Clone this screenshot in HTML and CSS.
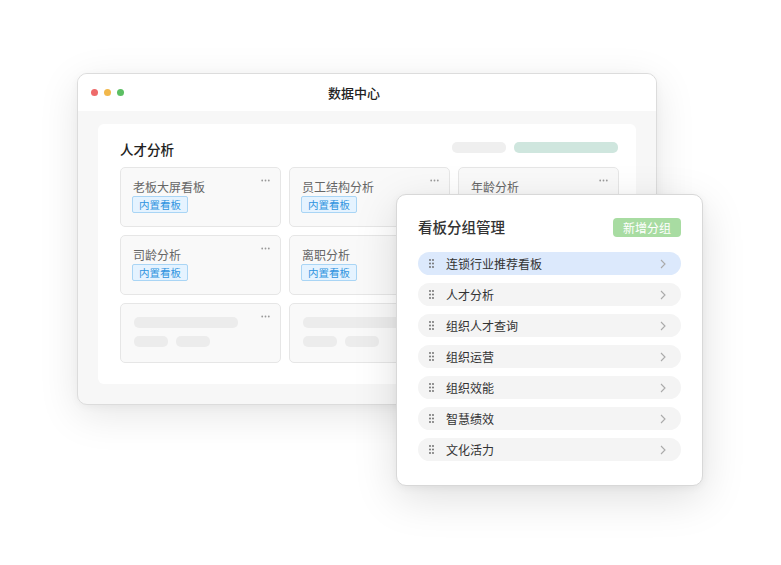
FILE: index.html
```html
<!DOCTYPE html>
<html lang="zh-CN">
<head>
<meta charset="utf-8">
<title>数据中心</title>
<link rel="stylesheet" href="styles.css">
</head>
<body>
<div class="desk">
  <div class="window">
    <div class="titlebar">
      <div class="dots"><span class="dot red"></span><span class="dot yellow"></span><span class="dot green"></span></div>
      <div class="wtitle">数据中心</div>
    </div>
    <div class="wbody">
      <div class="panel">
        <div class="phead">
          <div class="ptitle">人才分析</div>
          <div class="pills"><span class="pill gray"></span><span class="pill mint"></span></div>
        </div>
        <div class="grid">
          <div class="card"><div class="ctitle">老板大屏看板</div><span class="badge">内置看板</span><svg class="more" width="9" height="3" viewBox="0 0 9 3"><circle cx="1.2" cy="1.5" r="0.9"/><circle cx="4.5" cy="1.5" r="0.9"/><circle cx="7.8" cy="1.5" r="0.9"/></svg></div>
          <div class="card"><div class="ctitle">员工结构分析</div><span class="badge">内置看板</span><svg class="more" width="9" height="3" viewBox="0 0 9 3"><circle cx="1.2" cy="1.5" r="0.9"/><circle cx="4.5" cy="1.5" r="0.9"/><circle cx="7.8" cy="1.5" r="0.9"/></svg></div>
          <div class="card"><div class="ctitle">年龄分析</div><svg class="more" width="9" height="3" viewBox="0 0 9 3"><circle cx="1.2" cy="1.5" r="0.9"/><circle cx="4.5" cy="1.5" r="0.9"/><circle cx="7.8" cy="1.5" r="0.9"/></svg></div>
          <div class="card"><div class="ctitle">司龄分析</div><span class="badge">内置看板</span><svg class="more" width="9" height="3" viewBox="0 0 9 3"><circle cx="1.2" cy="1.5" r="0.9"/><circle cx="4.5" cy="1.5" r="0.9"/><circle cx="7.8" cy="1.5" r="0.9"/></svg></div>
          <div class="card"><div class="ctitle">离职分析</div><span class="badge">内置看板</span><svg class="more" width="9" height="3" viewBox="0 0 9 3"><circle cx="1.2" cy="1.5" r="0.9"/><circle cx="4.5" cy="1.5" r="0.9"/><circle cx="7.8" cy="1.5" r="0.9"/></svg></div>
          <div class="card"></div>
          <div class="card sk"><div class="skbar"></div><div class="skrow"><span class="skpill"></span><span class="skpill"></span></div><svg class="more" width="9" height="3" viewBox="0 0 9 3"><circle cx="1.2" cy="1.5" r="0.9"/><circle cx="4.5" cy="1.5" r="0.9"/><circle cx="7.8" cy="1.5" r="0.9"/></svg></div>
          <div class="card sk"><div class="skbar"></div><div class="skrow"><span class="skpill"></span><span class="skpill"></span></div></div>
          <div class="card sk"><div class="skbar"></div><div class="skrow"><span class="skpill"></span><span class="skpill"></span></div></div>
        </div>
      </div>
    </div>
  </div>

  <div class="popup">
    <div class="pophead">
      <div class="poptitle">看板分组管理</div>
      <button class="addbtn">新增分组</button>
    </div>
    <ul class="glist">
      <li class="gitem active"><svg class="drag" width="5" height="9" viewBox="0 0 5 9"><circle cx="1" cy="1" r="0.9"/><circle cx="4" cy="1" r="0.9"/><circle cx="1" cy="4.5" r="0.9"/><circle cx="4" cy="4.5" r="0.9"/><circle cx="1" cy="8" r="0.9"/><circle cx="4" cy="8" r="0.9"/></svg><span class="gname">连锁行业推荐看板</span><svg class="chev" width="6" height="10" viewBox="0 0 6 10"><path d="M1 1 L5 5 L1 9" fill="none" stroke-width="1.1"/></svg></li>
      <li class="gitem"><svg class="drag" width="5" height="9" viewBox="0 0 5 9"><circle cx="1" cy="1" r="0.9"/><circle cx="4" cy="1" r="0.9"/><circle cx="1" cy="4.5" r="0.9"/><circle cx="4" cy="4.5" r="0.9"/><circle cx="1" cy="8" r="0.9"/><circle cx="4" cy="8" r="0.9"/></svg><span class="gname">人才分析</span><svg class="chev" width="6" height="10" viewBox="0 0 6 10"><path d="M1 1 L5 5 L1 9" fill="none" stroke-width="1.1"/></svg></li>
      <li class="gitem"><svg class="drag" width="5" height="9" viewBox="0 0 5 9"><circle cx="1" cy="1" r="0.9"/><circle cx="4" cy="1" r="0.9"/><circle cx="1" cy="4.5" r="0.9"/><circle cx="4" cy="4.5" r="0.9"/><circle cx="1" cy="8" r="0.9"/><circle cx="4" cy="8" r="0.9"/></svg><span class="gname">组织人才查询</span><svg class="chev" width="6" height="10" viewBox="0 0 6 10"><path d="M1 1 L5 5 L1 9" fill="none" stroke-width="1.1"/></svg></li>
      <li class="gitem"><svg class="drag" width="5" height="9" viewBox="0 0 5 9"><circle cx="1" cy="1" r="0.9"/><circle cx="4" cy="1" r="0.9"/><circle cx="1" cy="4.5" r="0.9"/><circle cx="4" cy="4.5" r="0.9"/><circle cx="1" cy="8" r="0.9"/><circle cx="4" cy="8" r="0.9"/></svg><span class="gname">组织运营</span><svg class="chev" width="6" height="10" viewBox="0 0 6 10"><path d="M1 1 L5 5 L1 9" fill="none" stroke-width="1.1"/></svg></li>
      <li class="gitem"><svg class="drag" width="5" height="9" viewBox="0 0 5 9"><circle cx="1" cy="1" r="0.9"/><circle cx="4" cy="1" r="0.9"/><circle cx="1" cy="4.5" r="0.9"/><circle cx="4" cy="4.5" r="0.9"/><circle cx="1" cy="8" r="0.9"/><circle cx="4" cy="8" r="0.9"/></svg><span class="gname">组织效能</span><svg class="chev" width="6" height="10" viewBox="0 0 6 10"><path d="M1 1 L5 5 L1 9" fill="none" stroke-width="1.1"/></svg></li>
      <li class="gitem"><svg class="drag" width="5" height="9" viewBox="0 0 5 9"><circle cx="1" cy="1" r="0.9"/><circle cx="4" cy="1" r="0.9"/><circle cx="1" cy="4.5" r="0.9"/><circle cx="4" cy="4.5" r="0.9"/><circle cx="1" cy="8" r="0.9"/><circle cx="4" cy="8" r="0.9"/></svg><span class="gname">智慧绩效</span><svg class="chev" width="6" height="10" viewBox="0 0 6 10"><path d="M1 1 L5 5 L1 9" fill="none" stroke-width="1.1"/></svg></li>
      <li class="gitem"><svg class="drag" width="5" height="9" viewBox="0 0 5 9"><circle cx="1" cy="1" r="0.9"/><circle cx="4" cy="1" r="0.9"/><circle cx="1" cy="4.5" r="0.9"/><circle cx="4" cy="4.5" r="0.9"/><circle cx="1" cy="8" r="0.9"/><circle cx="4" cy="8" r="0.9"/></svg><span class="gname">文化活力</span><svg class="chev" width="6" height="10" viewBox="0 0 6 10"><path d="M1 1 L5 5 L1 9" fill="none" stroke-width="1.1"/></svg></li>
    </ul>
  </div>
</div>
</body>
</html>
```

FILE: styles.css
```css
* { box-sizing: border-box; }
html, body { margin: 0; padding: 0; background: #fff; }
body {
  font-family: "Noto Sans CJK SC", "Noto Sans", sans-serif;
  width: 781px;
  height: 565px;
  overflow: hidden;
}
.desk { position: relative; width: 781px; height: 565px; background: #fff; }

.window {
  position: absolute;
  left: 77px;
  top: 73px;
  width: 580px;
  height: 332px;
  border: 1px solid #dcdcdc;
  border-radius: 10px;
  background: #f7f7f7;
  overflow: hidden;
  box-shadow: 0 10px 40px rgba(0, 0, 0, 0.10), 0 2px 8px rgba(0, 0, 0, 0.04);
}
.titlebar {
  height: 37px;
  background: #fff;
  display: flex;
  align-items: center;
  padding-left: 12.5px;
  padding-right: 71.5px;
}
.dots { display: flex; gap: 6px; }
.dot { width: 7px; height: 7px; border-radius: 50%; display: block; }
.dot.red { background: #ee6a6a; }
.dot.yellow { background: #f2b84b; }
.dot.green { background: #5cbf63; }
.wtitle {
  flex: 1;
  text-align: center;
  font-size: 13px;
  font-weight: 500;
  color: #222;
  line-height: 18px;
}
.wbody { padding: 13px 20px 20px 20px; }
.panel {
  background: #fff;
  border-radius: 6px;
  height: 260px;
  padding: 15px 18px 0 22px;
}
.phead { display: flex; align-items: center; justify-content: space-between; height: 20px; margin-bottom: 8px; }
.ptitle { font-size: 13.5px; color: #222; line-height: 20px; font-weight: 500; }
.pills { display: flex; gap: 8px; margin-top: -4px; }
.pill { display: block; height: 11px; border-radius: 5px; }
.pill.gray { width: 54px; background: #efefef; }
.pill.mint { width: 104px; background: #cfe6de; }

.grid {
  display: grid;
  grid-template-columns: 161px 161px 161px;
  grid-auto-rows: 60px;
  column-gap: 8px;
  row-gap: 8px;
}
.card {
  position: relative;
  background: #f9f9f9;
  border: 1px solid #e6e6e6;
  border-radius: 5px;
  padding: 11px 0 0 11px;
}
.ctitle { font-size: 12px; line-height: 16px; color: #666; margin: 0 0 1px 1px; }
.badge {
  display: block;
  width: fit-content;
  font-size: 10.5px;
  line-height: 15px;
  padding: 0 6px;
  color: #2f93e0;
  background: #e5f3ff;
  border: 1px solid #a9d5f5;
  border-radius: 2px;
}
.more { position: absolute; top: 11px; right: 10px; fill: #9a9a9a; }
.card.sk { padding: 13px 0 0 13px; }
.skbar { width: 104px; height: 11px; border-radius: 5px; background: #ececec; }
.skrow { display: flex; gap: 8px; margin-top: 8px; }
.skpill { display: block; width: 34px; height: 11px; border-radius: 5px; background: #ececec; }

.popup {
  position: absolute;
  left: 396px;
  top: 194px;
  width: 307px;
  height: 292px;
  background: #fff;
  border: 1px solid #d8d8d8;
  border-radius: 10px;
  padding: 22px 21px 0 21px;
  box-shadow: 0 12px 44px rgba(0, 0, 0, 0.13), 0 2px 8px rgba(0, 0, 0, 0.05);
}
.pophead { display: flex; align-items: center; justify-content: space-between; height: 20px; margin-bottom: 15px; }
.poptitle { font-size: 14.5px; font-weight: 500; color: #333; line-height: 20px; }
.addbtn {
  font-family: inherit;
  border: none;
  background: #a8dca2;
  color: #fff;
  font-size: 12px;
  line-height: 19px;
  height: 19px;
  padding: 0 10px;
  border-radius: 4px;
  margin: 0;
}
.glist { list-style: none; margin: 0; padding: 0; display: flex; flex-direction: column; gap: 8px; }
.gitem {
  height: 23px;
  border-radius: 12px;
  background: #f4f4f4;
  display: flex;
  align-items: center;
  padding: 0 15px 0 11px;
}
.gitem.active { background: #dce9fc; }
.drag { fill: #666; flex: none; }
.gname { flex: 1; margin-left: 12px; font-size: 12px; color: #333; line-height: 16px; font-weight: 400; }
.chev { stroke: #aaa; flex: none; }
```
